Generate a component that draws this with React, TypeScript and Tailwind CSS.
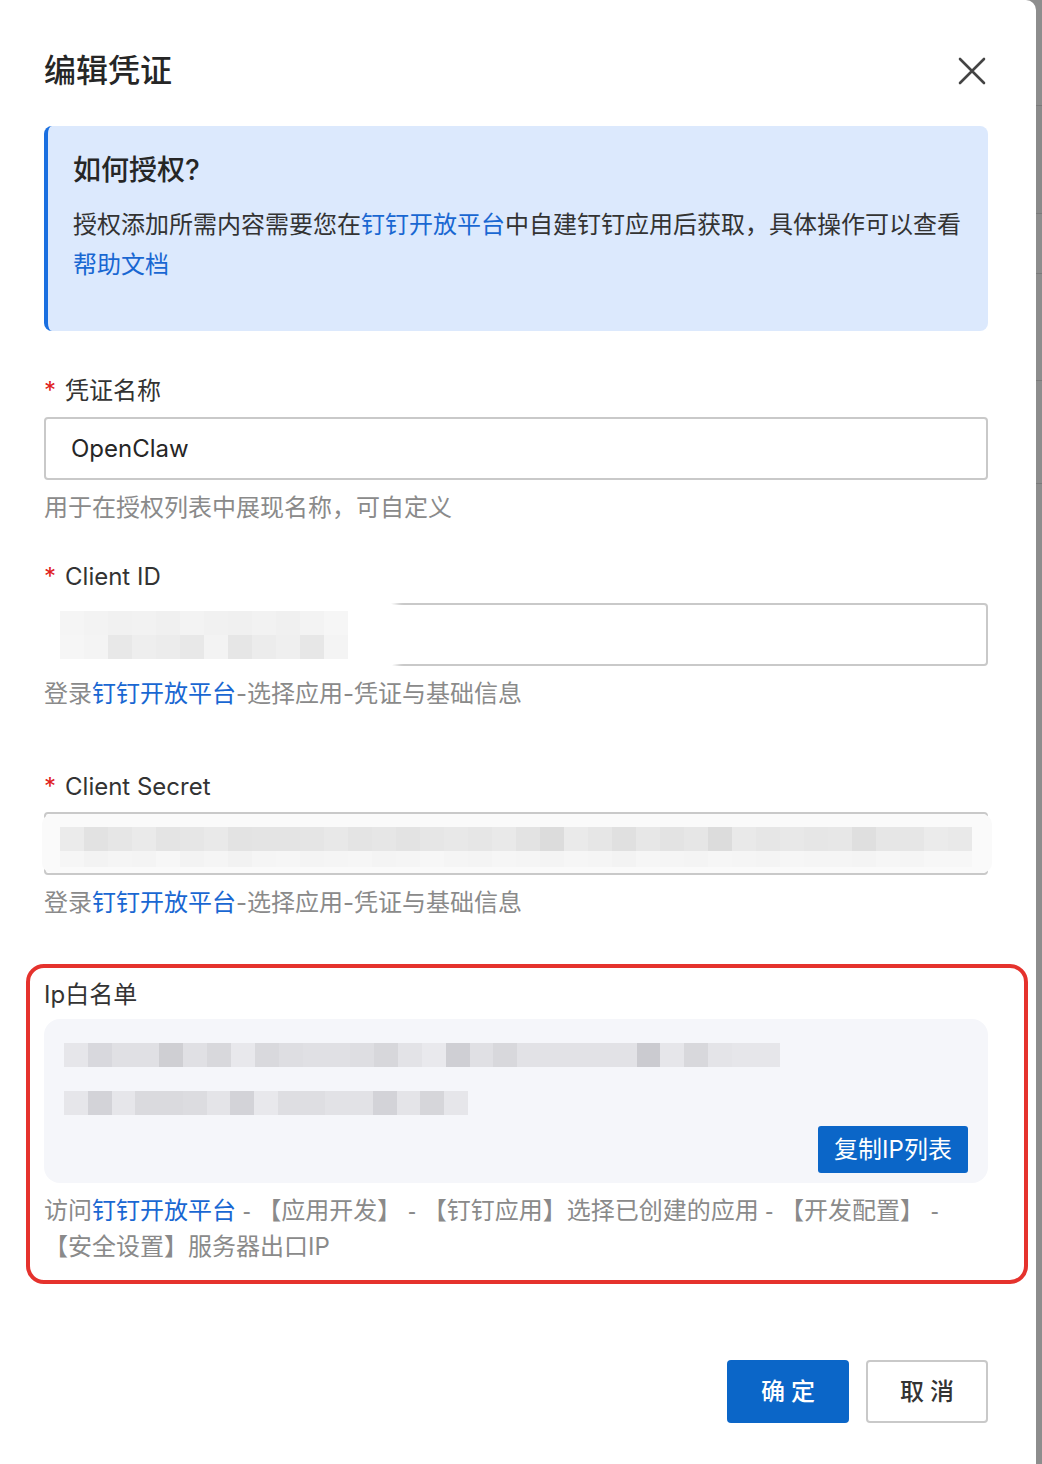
import React from "react";

const idRow1 = ["#f5f5f5","#f3f3f3","#f1f1f1","#f2f2f2","#f0f0f0","#f3f3f3","#f1f1f1","#f0f0f0","#f2f2f2","#f0f0f0","#f3f3f3","#f6f6f6"];
const idRow2 = ["#f6f6f6","#f4f4f4","#e8e8e8","#eeeeee","#ececec","#e8e8e8","#f3f3f3","#e6e6e6","#ececec","#efefef","#e7e7e7","#f4f4f4"];

const secRow1 = ["#ebebeb","#e2e2e2","#e6e6e6","#eaeaea","#e4e4e4","#e6e6e6","#e9e9e9","#e3e3e3","#e4e4e4","#e4e4e4","#e5e5e5","#e8e8e8","#e4e4e4","#e6e6e6","#e3e3e3","#e6e6e6","#e8e8e8","#e6e6e6","#e9e9e9","#e3e3e3","#dcdcdc","#eaeaea","#e6e6e6","#e0e0e0","#e7e7e7","#e3e3e3","#e6e6e6","#dcdcdc","#e9e9e9","#e6e6e6","#e8e8e8","#e6e6e6","#e7e7e7","#dfdfdf","#e6e6e6","#e6e6e6","#ebebeb","#e9e9e9"];
const secRow2 = ["#f6f6f6","#f3f3f3","#f5f5f5","#f4f4f4","#f7f7f7","#f3f3f3","#f5f5f5","#f2f2f2","#f5f5f5","#f6f6f6","#f4f4f4","#f5f5f5","#f6f6f6","#f4f4f4","#f5f5f5","#f7f7f7","#f5f5f5","#f4f4f4","#f6f6f6","#f5f5f5","#f4f4f4","#f6f6f6","#f5f5f5","#f3f3f3","#f6f6f6","#f5f5f5","#f4f4f4","#f6f6f6","#f5f5f5","#f4f4f4","#f6f6f6","#f5f5f5","#f5f5f5","#f4f4f4","#f6f6f6","#f5f5f5","#f7f7f7","#f7f7f7"];

const ipRow1 = ["#e6e6ea","#d8d8dd","#e0e0e4","#e0e0e4","#cfcfd3","#e0e0e4","#d8d8dc","#e8e8ec","#d9d9dd","#dedee2","#e0e0e4","#e0e0e4","#dedee2","#d7d7db","#e3e3e7","#e9e9ed","#cfcfd4","#e0e0e4","#d8d8dc","#e2e2e6","#e2e2e6","#e2e2e6","#e2e2e6","#e2e2e6","#cbcbd0","#e6e6ea","#d8d8dc","#e4e4e8","#e6e6ea","#e6e6ea"];
const ipRow2 = ["#e6e6ea","#d3d3d8","#e6e6ea","#dadade","#dadade","#dcdce0","#e4e4e8","#d3d3d8","#e8e8ec","#dedee2","#dedee2","#e2e2e6","#e2e2e6","#d3d3d8","#e4e4e8","#d6d6da","#e6e6ea"];

function Mosaic({ colors, className }: { colors: string[]; className: string }) {
  return (
    <div className={"flex " + className}>
      {colors.map((c, i) => (
        <div key={i} className="flex-1 h-full" style={{ backgroundColor: c }} />
      ))}
    </div>
  );
}

function Label({ text }: { text: string }) {
  return (
    <div className="text-[24px] leading-[36px] text-[#333]">
      <span className="text-[#e02020] mr-[9px]">*</span>
      {text}
    </div>
  );
}

function Link({ children }: { children: React.ReactNode }) {
  return <span className="text-[#1967d2]">{children}</span>;
}

function Dash() {
  return <span className="font-['Liberation_Sans',sans-serif]"> - </span>;
}

export default function App() {
  return (
    <div className="flex min-h-[1464px] w-[1042px] bg-[#8d8d8d] font-['Inter','Noto_Sans_CJK_SC',sans-serif]">
      <div className="w-[1036px] bg-white rounded-tr-[10px] pl-[44px] pr-[48px] pt-[47px] pb-[42px]">
        {/* Title */}
        <div className="flex items-center justify-between h-[48px]">
          <div className="text-[32px] leading-[48px] font-medium text-[#262626]">编辑凭证</div>
          <svg width="28" height="28" viewBox="0 0 28 28" className="mr-[2px]">
            <path d="M2 2 L26 26 M26 2 L2 26" stroke="#444" strokeWidth="2.6" strokeLinecap="round" fill="none" />
          </svg>
        </div>

        {/* Info */}
        <div className="mt-[31px] h-[205px] rounded-[8px] border-l-[4px] border-[#1a6fe0] bg-[#dce9fd] pl-[25px] pr-[24px] pt-[24px]">
          <div className="text-[28px] leading-[40px] font-medium text-[#262626]">如何授权?</div>
          <div className="mt-[15px] text-[24px] leading-[40px] text-[#333]">
            授权添加所需内容需要您在<Link>钉钉开放平台</Link>中自建钉钉应用后获取，具体操作可以查看<Link>帮助文档</Link>
          </div>
        </div>

        {/* Name */}
        <div className="mt-[42px]">
          <Label text="凭证名称" />
        </div>
        <div className="mt-[8px] h-[63px] rounded-[4px] border-2 border-[#c9c9c9] pl-[25px] flex items-center text-[24px] text-[#262626]">
          OpenClaw
        </div>
        <div className="mt-[10px] text-[24px] leading-[36px] text-[#8a8a8a]">用于在授权列表中展现名称，可自定义</div>

        {/* Client ID */}
        <div className="mt-[33px]">
          <Label text="Client ID" />
        </div>
        <div className="relative mt-[8px] h-[63px] rounded-[4px] border-2 border-[#c9c9c9]">
          <div className="absolute left-[-6px] top-[-4px] w-[355px] h-[68px] rounded-[10px] bg-white shadow-[0_0_6px_4px_#ffffff]">
            <div className="ml-[20px] mt-[10px] w-[288px]">
              <Mosaic colors={idRow1} className="h-[24px]" />
              <Mosaic colors={idRow2} className="h-[24px]" />
            </div>
          </div>
        </div>
        <div className="mt-[10px] text-[24px] leading-[36px] text-[#8a8a8a]">
          登录<Link>钉钉开放平台</Link>-选择应用-凭证与基础信息
        </div>

        {/* Client Secret */}
        <div className="mt-[57px]">
          <Label text="Client Secret" />
        </div>
        <div className="relative mt-[7px] h-[63px] rounded-[4px] border-2 border-[#c9c9c9]">
          <div className="absolute left-[-4px] top-[0px] w-[950px] h-[59px] rounded-[10px] bg-[#fafafa]">
            <div className="ml-[18px] mt-[13px] w-[912px]">
              <Mosaic colors={secRow1} className="h-[24px]" />
              <Mosaic colors={secRow2} className="h-[16px]" />
            </div>
          </div>
        </div>
        <div className="mt-[10px] text-[24px] leading-[36px] text-[#8a8a8a]">
          登录<Link>钉钉开放平台</Link>-选择应用-凭证与基础信息
        </div>

        {/* IP whitelist (highlighted) */}
        <div className="mt-[43px] ml-[-18px] mr-[-40px] rounded-[18px] border-[4px] border-[#e5322d] pl-[14px] pr-[36px] pt-[9px] pb-[15px]">
          <div className="text-[24px] leading-[36px] text-[#333]">Ip白名单</div>
          <div className="mt-[6px] h-[164px] rounded-[16px] bg-[#f5f6fa] px-[20px] pt-[24px] pb-[10px] flex flex-col">
            <Mosaic colors={ipRow1} className="h-[24px] w-[716px]" />
            <Mosaic colors={ipRow2} className="mt-[24px] h-[24px] w-[404px]" />
            <div className="mt-auto flex justify-end">
              <div className="h-[47px] w-[150px] rounded-[3px] bg-[#0b66c8] text-white text-[24px] flex items-center justify-center">
                复制IP列表
              </div>
            </div>
          </div>
          <div className="mt-[10px] text-[24px] leading-[36px] text-[#8a8a8a]">
            访问<Link>钉钉开放平台</Link><Dash />【应用开发】<Dash />【钉钉应用】选择已创建的应用<Dash />【开发配置】<Dash />【安全设置】服务器出口IP
          </div>
        </div>

        {/* Footer */}
        <div className="mt-[76px] flex justify-end gap-[17px]">
          <div className="h-[63px] w-[122px] rounded-[4px] bg-[#0b66c8] text-white text-[24px] font-medium tracking-[0.25em] flex items-center justify-center pl-[6px]">
            确定
          </div>
          <div className="h-[63px] w-[122px] rounded-[4px] border-2 border-[#c9c9c9] bg-white text-[#333] text-[24px] font-medium tracking-[0.25em] flex items-center justify-center pl-[6px]">
            取消
          </div>
        </div>
      </div>
      <div className="flex-1 flex flex-col">
        <div className="h-[105px]" />
        <div className="h-[1px] bg-[#7a7a7a]" />
        <div className="h-[107px] bg-[#8a8a8a]" />
        <div className="h-[1px] bg-[#7a7a7a]" />
        <div className="h-[59px]" />
        <div className="h-[1px] bg-[#7a7a7a]" />
        <div className="h-[106px]" />
        <div className="h-[1px] bg-[#7a7a7a]" />
        <div className="h-[102px]" />
        <div className="h-[1px] bg-[#7a7a7a]" />
      </div>
    </div>
  );
}
